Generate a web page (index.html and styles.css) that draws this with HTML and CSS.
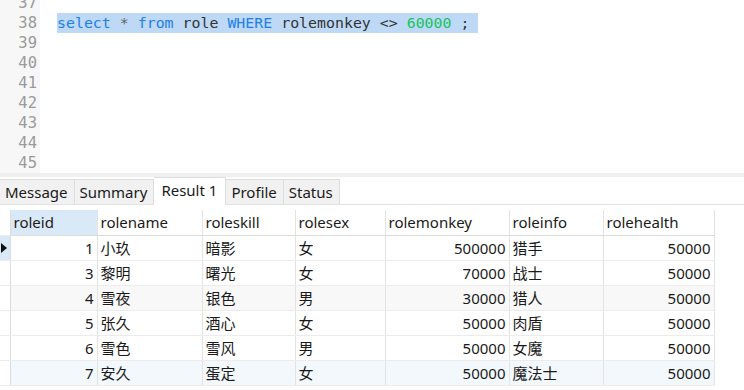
FILE: index.html
```html
<!DOCTYPE html>
<html>
<head>
<meta charset="utf-8">
<link rel="stylesheet" href="styles.css">
</head>
<body>
<div class="editor">
  <div class="gutter">
    <div class="ln">37</div><div class="ln">38</div><div class="ln">39</div><div class="ln">40</div><div class="ln">41</div><div class="ln">42</div><div class="ln">43</div><div class="ln">44</div><div class="ln">45</div>
  </div>
  <div class="code">
    <div class="line"></div>
    <div class="line"><span class="sel"><span class="kw">select</span> <span class="op">*</span> <span class="kw">from</span> role <span class="kw">WHERE</span> rolemonkey &lt;&gt; <span class="num">60000</span> ; </span></div>
  </div>
</div>
<div class="splitter"></div>
<div class="tabs">
  <div class="tab">Message</div>
  <div class="tab">Summary</div>
  <div class="tab active">Result 1</div>
  <div class="tab">Profile</div>
  <div class="tab">Status</div>
</div>
<div class="result">
  <table class="grid">
    <colgroup>
      <col class="c0"><col class="c1"><col class="c2"><col class="c3"><col class="c4"><col class="c5"><col class="c6"><col class="c7">
    </colgroup>
    <thead>
      <tr><th class="ind"></th><th class="hsel">roleid</th><th>rolename</th><th>roleskill</th><th>rolesex</th><th>rolemonkey</th><th>roleinfo</th><th>rolehealth</th></tr>
    </thead>
    <tbody>
      <tr class="cur"><td class="ind"><span class="arrow"></span></td><td class="r">1</td><td>小玖</td><td>暗影</td><td>女</td><td class="r">500000</td><td>猎手</td><td class="r">50000</td></tr>
      <tr><td class="ind"></td><td class="r">3</td><td>黎明</td><td>曙光</td><td>女</td><td class="r">70000</td><td>战士</td><td class="r">50000</td></tr>
      <tr class="alt"><td class="ind"></td><td class="r">4</td><td>雪夜</td><td>银色</td><td>男</td><td class="r">30000</td><td>猎人</td><td class="r">50000</td></tr>
      <tr><td class="ind"></td><td class="r">5</td><td>张久</td><td>酒心</td><td>女</td><td class="r">50000</td><td>肉盾</td><td class="r">50000</td></tr>
      <tr><td class="ind"></td><td class="r">6</td><td>雪色</td><td>雪风</td><td>男</td><td class="r">50000</td><td>女魔</td><td class="r">50000</td></tr>
      <tr class="hov"><td class="ind"></td><td class="r">7</td><td>安久</td><td>蛋定</td><td>女</td><td class="r">50000</td><td>魔法士</td><td class="r">50000</td></tr>
    </tbody>
  </table>
</div>
</body>
</html>
```

FILE: styles.css
```css
html, body {
  margin: 0;
  padding: 0;
  background: #ffffff;
}
body {
  width: 744px;
  height: 390px;
  overflow: hidden;
  font-family: "Noto Sans", "Noto Sans CJK SC", sans-serif;
  color: #1a1a1a;
}
.editor {
  height: 173px;
  display: flex;
  overflow: hidden;
  font-family: "DejaVu Sans Mono", monospace;
  font-size: 14.9px;
}
.gutter {
  width: 40px;
  background: #f7f7f7;
  margin-top: -7px;
  padding-right: 3px;
  box-sizing: border-box;
  text-align: right;
  color: #9a9a9a;
  font-size: 15.5px;
}
.ln {
  height: 20px;
  line-height: 20px;
}
.code {
  flex: 1;
  padding-left: 17px;
  margin-top: -7px;
  color: #333333;
}
.line {
  height: 20px;
  line-height: 20px;
  white-space: pre;
}
.sel {
  background: #bdd9f6;
  display: inline-block;
  height: 20px;
}
.kw { color: #1f7fe8; }
.op { color: #666666; }
.num { color: #17c45c; }
.splitter {
  height: 4px;
  background: #efefef;
}
.tabs {
  height: 27px;
  display: flex;
  align-items: flex-end;
  border-bottom: 1px solid #e2e2e2;
  font-size: 15px;
}
.tab {
  height: 25px;
  line-height: 25px;
  padding: 0 6px 0 5px;
  background: #f1f1f1;
  border: 1px solid #dedede;
  border-bottom: none;
  border-left: none;
  box-sizing: border-box;
  color: #1a1a1a;
}
.tab.active {
  height: 28px;
  line-height: 24px;
  background: #ffffff;
  margin-bottom: -1px;
  padding: 0 8px 0 7px;
}
.result {
  padding-top: 5px;
}
.grid {
  border-collapse: collapse;
  table-layout: fixed;
  width: 714px;
  font-size: 15px;
}
.c0 { width: 10px; }
.c1 { width: 87px; }
.c2 { width: 105px; }
.c3 { width: 93px; }
.c4 { width: 90px; }
.c5 { width: 124px; }
.c6 { width: 94px; }
.c7 { width: 111px; }
.grid th, .grid td {
  padding: 0 3px;
  white-space: nowrap;
  overflow: hidden;
  text-align: left;
  font-weight: normal;
  border-right: 1px solid #e3e3e3;
  border-bottom: 1px solid #ececec;
}
.grid th {
  height: 25px;
  line-height: 25px;
  border-bottom: 1px solid #dcdcdc;
  color: #1a1a1a;
}
.grid td {
  height: 24px;
  line-height: 24px;
}
.grid .ind {
  padding: 0;
  border-right: 1px solid #dcdcdc;
}
.grid th.ind {
  border-bottom: 1px solid #ececec;
}
.grid .hsel {
  background: #dae9f8;
}
.grid td.r {
  text-align: right;
}
.grid tr.alt td {
  background: #f8f8f8;
}
.grid tr.hov td {
  background: #f3f8fd;
}
.grid tr.cur td.ind {
  background: #dae9f8;
}
.grid tr.hov td.ind, .grid tr.alt td.ind {
  background: #ffffff;
}
.arrow {
  display: block;
  width: 0;
  height: 0;
  margin-left: 1px;
  border-top: 5px solid transparent;
  border-bottom: 5px solid transparent;
  border-left: 6px solid #111111;
}
```
